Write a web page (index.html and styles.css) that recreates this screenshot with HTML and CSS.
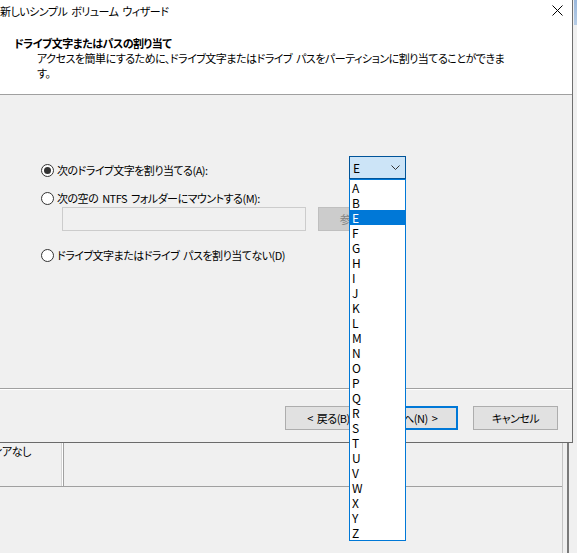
FILE: index.html
```html
<!DOCTYPE html>
<html lang="ja">
<head>
<meta charset="utf-8">
<title>新しいシンプル ボリューム ウィザード</title>
<link rel="stylesheet" href="styles.css">
</head>
<body>
<div class="screen">
  <div class="top">
    <div class="dialog">
      <div class="header">
        <div class="titlebar">
          <span class="title">新しいシンプル ボリューム ウィザード</span>
          <svg class="close" width="11" height="11" viewBox="0 0 11 11"><path d="M0.5 0.5 L10.5 10.5 M10.5 0.5 L0.5 10.5" stroke="#000" stroke-width="1" fill="none"/></svg>
        </div>
        <div class="heading">ドライブ文字またはパスの割り当て</div>
        <div class="desc">アクセスを簡単にするために、ドライブ文字またはドライブ パスをパーティションに割り当てることができま<br>す。</div>
      </div>
      <div class="body">
        <div class="option first"><span class="radio checked"></span><span class="label">次のドライブ文字を割り当てる(A):</span></div>
        <div class="option second"><span class="radio"></span><span class="label">次の空の NTFS フォルダーにマウントする(M):</span></div>
        <div class="pathrow"><div class="textbox"></div><div class="btn disabled">参照(R)...</div></div>
        <div class="option third"><span class="radio"></span><span class="label">ドライブ文字またはドライブ パスを割り当てない(D)</span></div>
      </div>
      <div class="footer">
        <div class="btn back">&lt; 戻る(B)</div>
        <div class="btn next">次へ(N) &gt;</div>
        <div class="btn cancel">キャンセル</div>
      </div>
    </div>
    <div class="strip"><div class="strip-blue"></div></div>
  </div>
  <div class="behind">
    <div class="behind-grid">
      <div class="behind-row">
        <div class="cell1"><span class="celltext">ィアなし</span></div>
        <div class="divider"></div>
        <div class="cell2"></div>
      </div>
    </div>
    <div class="vline light"></div>
    <div class="vgap"></div>
    <div class="vline dark"></div>
  </div>

  <div class="combo">
    <span class="combo-value">E</span>
    <svg class="chevron" width="9" height="5" viewBox="0 0 9 5"><polyline points="0.5,0.5 4.5,4.5 8.5,0.5" stroke="#333" stroke-width="1" fill="none"/></svg>
  </div>
  <ul class="list">
    <li>A</li><li>B</li><li class="selected">E</li><li>F</li><li>G</li><li>H</li><li>I</li><li>J</li><li>K</li><li>L</li><li>M</li><li>N</li><li>O</li><li>P</li><li>Q</li><li>R</li><li>S</li><li>T</li><li>U</li><li>V</li><li>W</li><li>X</li><li>Y</li><li>Z</li>
  </ul>
</div>
</body>
</html>
```

FILE: styles.css
```css
* { box-sizing: border-box; }
html, body { margin: 0; padding: 0; }
body {
  font-family: "Noto Sans CJK JP", "Noto Sans", sans-serif;
  font-size: 11px;
  letter-spacing: -0.5px;
  word-spacing: 2px;
  font-feature-settings: "palt";
  color: #000;
  background: #f0f0f0;
}
.screen {
  position: relative;
  width: 577px;
  height: 553px;
  overflow: hidden;
  background: #f0f0f0;
}
.top { display: flex; height: 443px; }
.dialog {
  width: 573px;
  height: 443px;
  border-right: 1px solid #6f6f6f;
  border-bottom: 1px solid #6a6a6a;
  display: flex;
  flex-direction: column;
  background: #f0f0f0;
}
.header {
  height: 95px;
  background: #fff;
  border-bottom: 1px solid #a0a0a0;
}
.titlebar {
  height: 22px;
  display: flex;
  align-items: center;
  justify-content: space-between;
  padding-left: 0;
  padding-right: 9px;
}
.title { line-height: 22px; white-space: nowrap; }
.close { display: block; margin-top: -1px; }
.heading {
  margin-top: 14px;
  margin-left: 14px;
  line-height: 15px;
  font-weight: bold;
}
.desc {
  margin-left: 37px;
  line-height: 15px;
  white-space: nowrap;
}
.body {
  flex: 1;
  padding-top: 66px;
}
.option {
  display: flex;
  align-items: center;
  height: 18px;
  padding-left: 41px;
  gap: 3px;
  white-space: nowrap;
}
.option.second { margin-top: 10px; }
.option.third { margin-top: 15px; }
.radio {
  width: 13px;
  height: 13px;
  border: 1px solid #333;
  border-radius: 50%;
  background: #fff;
  display: flex;
  align-items: center;
  justify-content: center;
  flex: none;
}
.radio.checked::after {
  content: "";
  width: 7px;
  height: 7px;
  border-radius: 50%;
  background: #333;
}
.pathrow {
  display: flex;
  padding-left: 62px;
  gap: 12px;
  height: 24px;
}
.textbox {
  width: 244px;
  height: 24px;
  border: 1px solid #cccccc;
  background: #f0f0f0;
}
.btn {
  height: 24px;
  border: 1px solid #adadad;
  background: #e1e1e1;
  display: flex;
  align-items: center;
  justify-content: center;
  white-space: nowrap;
  line-height: 1;
}
.btn.disabled {
  width: 85px;
  background: #cccccc;
  border-color: #bfbfbf;
  color: #838383;
}
.footer {
  height: 54px;
  border-top: 1px solid #a0a0a0;
  box-shadow: inset 0 1px 0 #fff;
  display: flex;
  justify-content: flex-end;
  padding-top: 17px;
  padding-right: 14px;
}
.btn.back { width: 87px; }
.btn.next { width: 86px; border: 2px solid #0078d7; }
.btn.cancel { width: 85px; margin-left: 15px; }
.strip {
  width: 4px;
  height: 443px;
  background: #f0f0f0;
  padding-left: 1px;
}
.strip-blue {
  height: 25px;
  background: linear-gradient(#9ab8dc, #b7cde6);
}
.behind {
  display: flex;
  height: 110px;
}
.behind-grid { width: 562px; }
.behind-row {
  display: flex;
  height: 44px;
  border-bottom: 1px solid #a0a0a0;
}
.cell1 {
  width: 61px;
  overflow: hidden;
  line-height: 16px;
  white-space: nowrap;
}
.celltext { display: inline-block; margin-left: -6px; }
.divider {
  width: 3px;
  background: linear-gradient(to right, #d4d4d4 0 1px, #ffffff 1px 2px, #a0a0a0 2px 3px);
}
.cell2 { flex: 1; }
.vline { height: 110px; }
.vline.light { width: 1px; background: #c4c4c4; }
.vgap { width: 4px; }
.vline.dark { width: 2px; background: #7a7a7a; }

.combo {
  position: absolute;
  left: 349px;
  top: 156px;
  width: 57px;
  height: 23px;
  background: #cce4f7;
  border: 1px solid #005499;
  display: flex;
  align-items: center;
  justify-content: space-between;
  padding: 0 5px 0 3px;
  font-size: 12px;
  letter-spacing: 0;
}
.combo-value { line-height: 1; }
.chevron { display: block; }
.list {
  position: absolute;
  left: 349px;
  top: 179px;
  width: 57px;
  height: 362px;
  margin: 0;
  padding: 0;
  list-style: none;
  background: #fff;
  border: 1px solid #0078d7;
  font-size: 12px;
  letter-spacing: 0;
}
.list li {
  height: 15px;
  line-height: 15px;
  padding-left: 2px;
}
.list li.selected {
  background: #0078d7;
  color: #fff;
}
```
